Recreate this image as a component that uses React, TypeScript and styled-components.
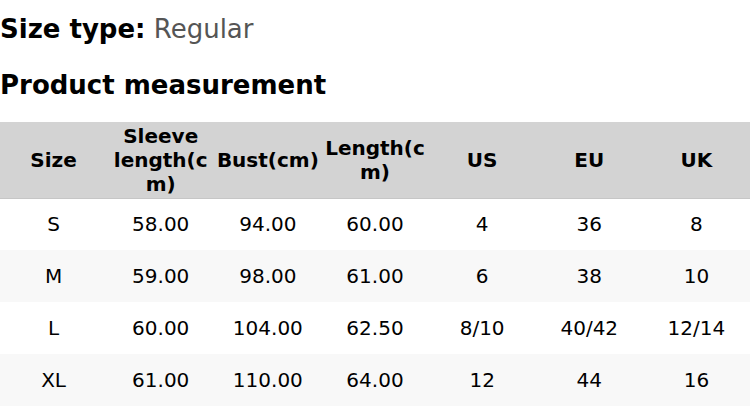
import React from 'react'
import styled, { createGlobalStyle } from 'styled-components'

const GlobalStyle = createGlobalStyle`
  html, body {
    margin: 0;
    padding: 0;
    background: #ffffff;
    font-family: "DejaVu Sans", "Liberation Sans", sans-serif;
    color: #000000;
  }
`

const rows = [
    { size: 'S', sleeve: '58.00', bust: '94.00', length: '60.00', us: '4', eu: '36', uk: '8' },
    { size: 'M', sleeve: '59.00', bust: '98.00', length: '61.00', us: '6', eu: '38', uk: '10' },
    { size: 'L', sleeve: '60.00', bust: '104.00', length: '62.50', us: '8/10', eu: '40/42', uk: '12/14' },
    { size: 'XL', sleeve: '61.00', bust: '110.00', length: '64.00', us: '12', eu: '44', uk: '16' },
]

const headers = ['Size', 'Sleeve length(cm)', 'Bust(cm)', 'Length(cm)', 'US', 'EU', 'UK']

const App = () => {
  return (
    <Wrapper>
        <GlobalStyle />
        <SizeType>
            <b>Size type:</b> <span>Regular</span>
        </SizeType>
        <Title>Product measurement</Title>
        <Table>
            <thead>
                <tr>
                    {headers.map((h) => <Th key={h}>{h}</Th>)}
                </tr>
            </thead>
            <tbody>
                {rows.map((r, i) => (
                    <Row key={r.size} $striped={i % 2 === 1}>
                        <Td>{r.size}</Td>
                        <Td>{r.sleeve}</Td>
                        <Td>{r.bust}</Td>
                        <Td>{r.length}</Td>
                        <Td>{r.us}</Td>
                        <Td>{r.eu}</Td>
                        <Td>{r.uk}</Td>
                    </Row>
                ))}
            </tbody>
        </Table>
    </Wrapper>
  )
}

export default App

const Wrapper = styled.div`
    width: 750px;
    padding-top: 14px;
`

const SizeType = styled.div`
    font-size: 26px;
    line-height: 30px;
    & > b{
        font-weight: bold;
    }
    & > span{
        color: #555555;
    }
`

const Title = styled.h2`
    margin: 26px 0 0 0;
    font-size: 26px;
    line-height: 30px;
    font-weight: bold;
`

const Table = styled.table`
    margin-top: 22px;
    width: 750px;
    table-layout: fixed;
    border-collapse: collapse;
    border-spacing: 0;
`

const Th = styled.th`
    background-color: #d3d3d3;
    border-bottom: 1px solid #c6c6c6;
    height: 76px;
    padding: 0 2px;
    box-sizing: border-box;
    font-size: 20px;
    line-height: 24px;
    font-weight: bold;
    text-align: center;
    vertical-align: middle;
    overflow-wrap: anywhere;
`

const Row = styled.tr<{ $striped: boolean }>`
    background-color: ${(props) => (props.$striped ? '#f8f8f8' : '#ffffff')};
`

const Td = styled.td`
    height: 52px;
    padding: 0 2px;
    box-sizing: border-box;
    font-size: 20px;
    text-align: center;
    vertical-align: middle;
`
